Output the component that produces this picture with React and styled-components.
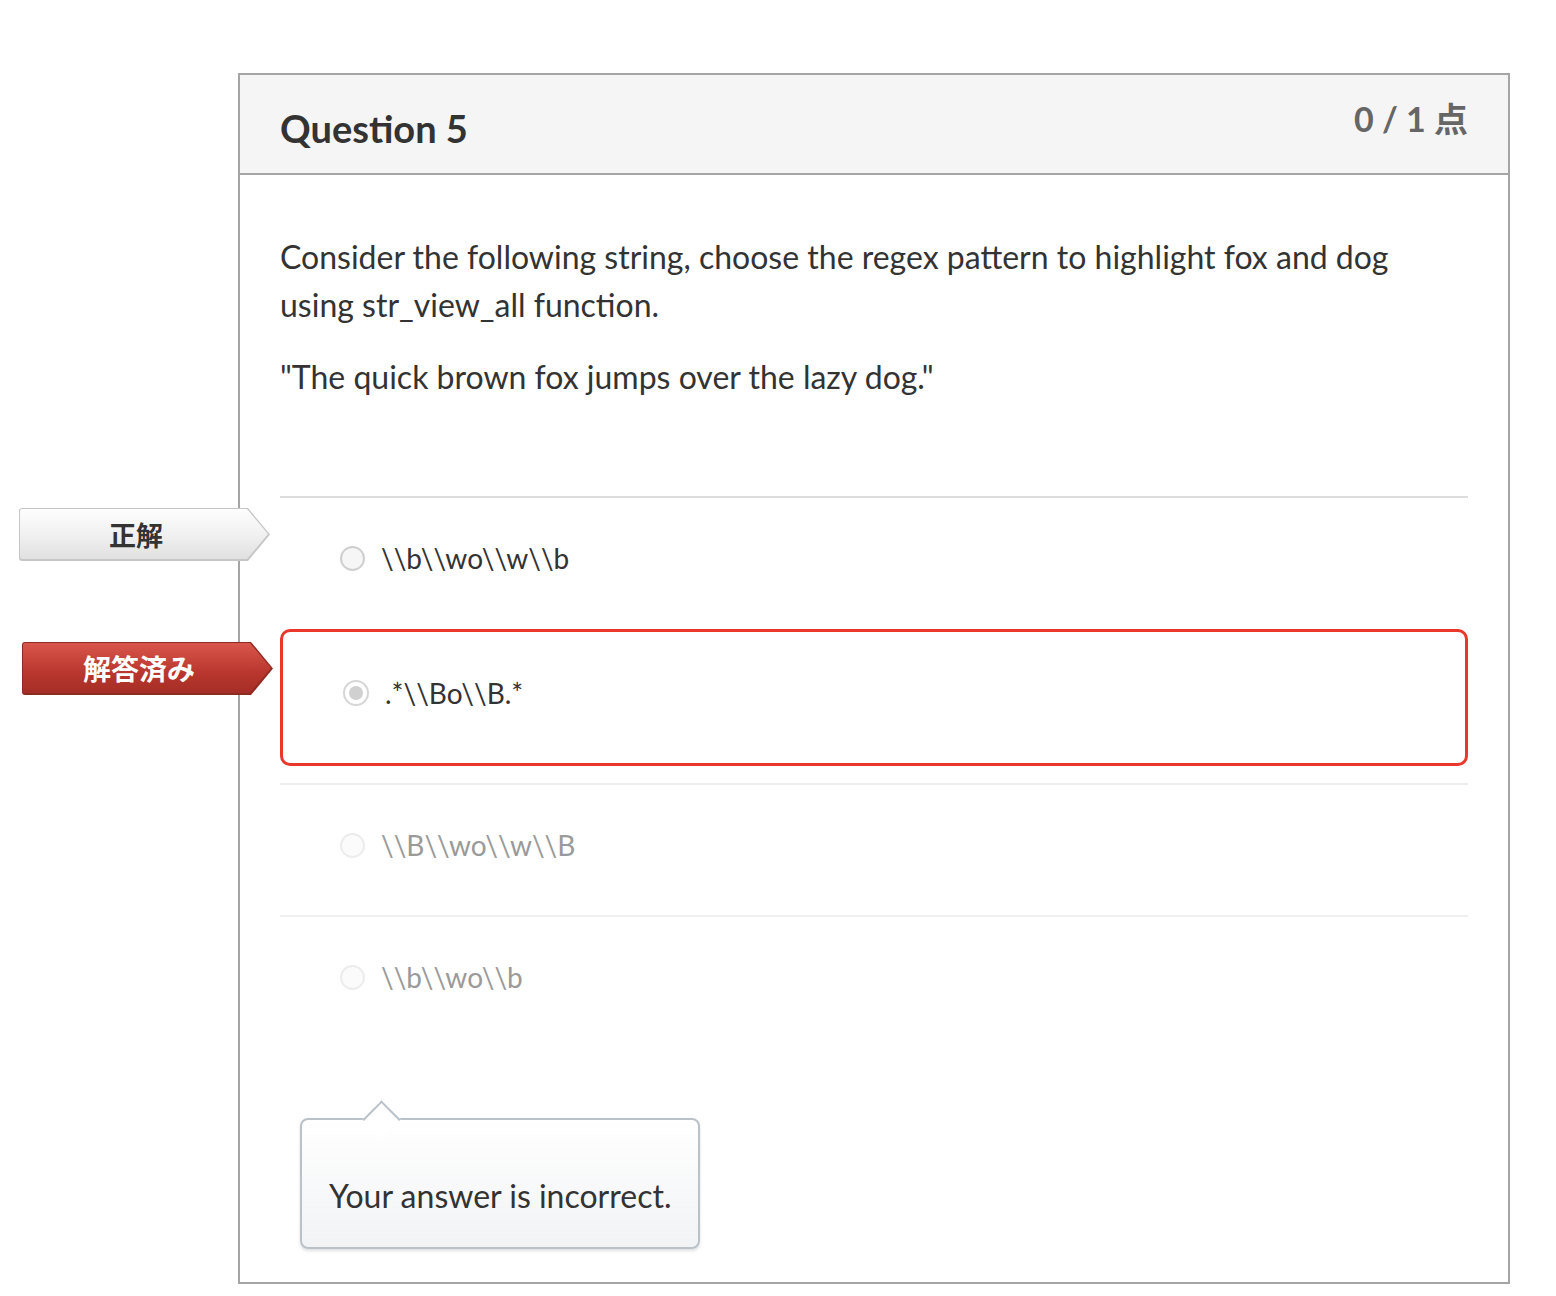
import React from "react";
import styled, { createGlobalStyle, css } from "styled-components";

const GlobalStyle = createGlobalStyle`
  * {
    box-sizing: border-box;
  }
  body {
    margin: 0;
    background: #ffffff;
    font-family: Lato, "Noto Sans CJK JP", sans-serif;
    color: #333333;
  }
`;

const Page = styled.div`
  padding: 73px 0 10px 238px;
`;

const Card = styled.div`
  width: 1272px;
  border: 2px solid #a5a5a5;
`;

const Header = styled.div`
  height: 100px;
  background: #f5f5f5;
  border-bottom: 2px solid #a5a5a5;
  padding: 0 40px;
  display: flex;
  justify-content: space-between;
  align-items: flex-start;
`;

const Title = styled.h2`
  margin: 34px 0 0;
  font-size: 38px;
  line-height: 38px;
  font-weight: 700;
  color: #333333;
`;

const Points = styled.div`
  margin-top: 27px;
  font-size: 34px;
  line-height: 34px;
  font-weight: 700;
  color: #666666;
`;

const Body = styled.div`
  padding: 58px 40px 33px;
`;

const QuestionText = styled.p`
  margin: 0 0 24px;
  font-size: 32px;
  line-height: 48px;
`;

const Answers = styled.div`
  margin-top: 95px;
  border-top: 2px solid #dddddd;
`;

const AnswerRow = styled.div`
  position: relative;
  height: 130px;
  padding: 0 0 10px 60px;
  display: flex;
  align-items: center;
  font-size: 28px;
  color: ${(p) => (p.$muted ? "#9a9a9a" : "#333333")};
  ${(p) =>
    p.$divider &&
    css`
      height: 132px;
      border-top: 2px solid #eeeeee;
    `}
  ${(p) =>
    p.$selected &&
    css`
      height: 137px;
      margin: 1px 0 17px;
      border: 3px solid #e9372a;
      border-radius: 10px;
    `}
`;

const Radio = styled.span`
  flex: none;
  width: 25px;
  height: 25px;
  border-radius: 50%;
  border: 2px solid ${(p) => (p.$muted ? "#ececec" : "#cfcfcf")};
  background: ${(p) => (p.$muted ? "#fbfbfb" : "#f6f6f6")};
  margin-right: 16px;
  display: flex;
  align-items: center;
  justify-content: center;
  ${(p) =>
    p.$checked &&
    css`
      width: 26px;
      height: 26px;
      background: #ffffff;
      border-color: #d6d6d6;
      &::after {
        content: "";
        width: 14px;
        height: 14px;
        border-radius: 50%;
        background: #d0d0d0;
      }
    `}
`;

const AnswerText = styled.span`
  line-height: 48px;
`;

const Tag = styled.div`
  position: absolute;
  top: 10px;
  left: -261px;
  width: 251px;
  height: 53px;
  padding: 1px 2px 2px 1px;
  background: ${(p) => (p.$variant === "answered" ? "#8f2a22" : "#c6c6c6")};
  clip-path: polygon(0 0, calc(100% - 22px) 0, 100% 50%, calc(100% - 22px) 100%, 0 100%);
  border-radius: 3px 0 0 3px;
`;

const TagInner = styled.div`
  width: 100%;
  height: 100%;
  display: flex;
  align-items: center;
  justify-content: center;
  padding-right: 16px;
  clip-path: polygon(0 0, calc(100% - 21px) 0, 100% 50%, calc(100% - 21px) 100%, 0 100%);
  border-radius: 2px 0 0 2px;
  font-family: "Noto Sans CJK JP", sans-serif;
  font-size: ${(p) => (p.$variant === "answered" ? "28px" : "27px")};
  font-weight: 700;
  ${(p) =>
    p.$variant === "answered"
      ? css`
          background: linear-gradient(#d9564c, #b8362d 60%, #a52e26);
          color: #ffffff;
        `
      : css`
          background: linear-gradient(#fdfdfd, #eeeeee 60%, #e0e0e0);
          color: #333333;
        `}
`;

const Feedback = styled.div`
  position: relative;
  margin: 71px 0 0 20px;
  width: 400px;
  height: 131px;
  border: 2px solid #b9c1c9;
  border-radius: 8px;
  background: linear-gradient(#ffffff, #f2f3f5);
  box-shadow: 0 2px 3px rgba(0, 0, 0, 0.12);
  padding: 52px 0 0 27px;
  font-size: 32px;
  line-height: 48px;
  color: #333333;

  &::before {
    content: "";
    position: absolute;
    top: -14px;
    left: 66px;
    width: 25px;
    height: 25px;
    background: #ffffff;
    border-top: 2px solid #b9c1c9;
    border-left: 2px solid #b9c1c9;
    transform: rotate(45deg);
  }
`;

const answers = [
  { text: "\\\\b\\\\wo\\\\w\\\\b", tag: "correct" },
  { text: ".*\\\\Bo\\\\B.*", tag: "answered", selected: true },
  { text: "\\\\B\\\\wo\\\\w\\\\B", muted: true, divider: true },
  { text: "\\\\b\\\\wo\\\\b", muted: true, divider: true },
];

export default function App() {
  return (
    <Page>
      <GlobalStyle />
      <Card>
        <Header>
          <Title>Question 5</Title>
          <Points>0 / 1 点</Points>
        </Header>
        <Body>
          <QuestionText>
            Consider the following string, choose the regex pattern to highlight fox and dog
            using str_view_all function.
          </QuestionText>
          <QuestionText>"The quick brown fox jumps over the lazy dog."</QuestionText>
          <Answers>
            {answers.map((a) => (
              <AnswerRow
                key={a.text}
                $muted={a.muted}
                $selected={a.selected}
                $divider={a.divider}
              >
                {a.tag && (
                  <Tag $variant={a.tag}>
                    <TagInner $variant={a.tag}>
                      {a.tag === "answered" ? "解答済み" : "正解"}
                    </TagInner>
                  </Tag>
                )}
                <Radio $muted={a.muted} $checked={a.selected} />
                <AnswerText>{a.text}</AnswerText>
              </AnswerRow>
            ))}
          </Answers>
          <Feedback>Your answer is incorrect.</Feedback>
        </Body>
      </Card>
    </Page>
  );
}
